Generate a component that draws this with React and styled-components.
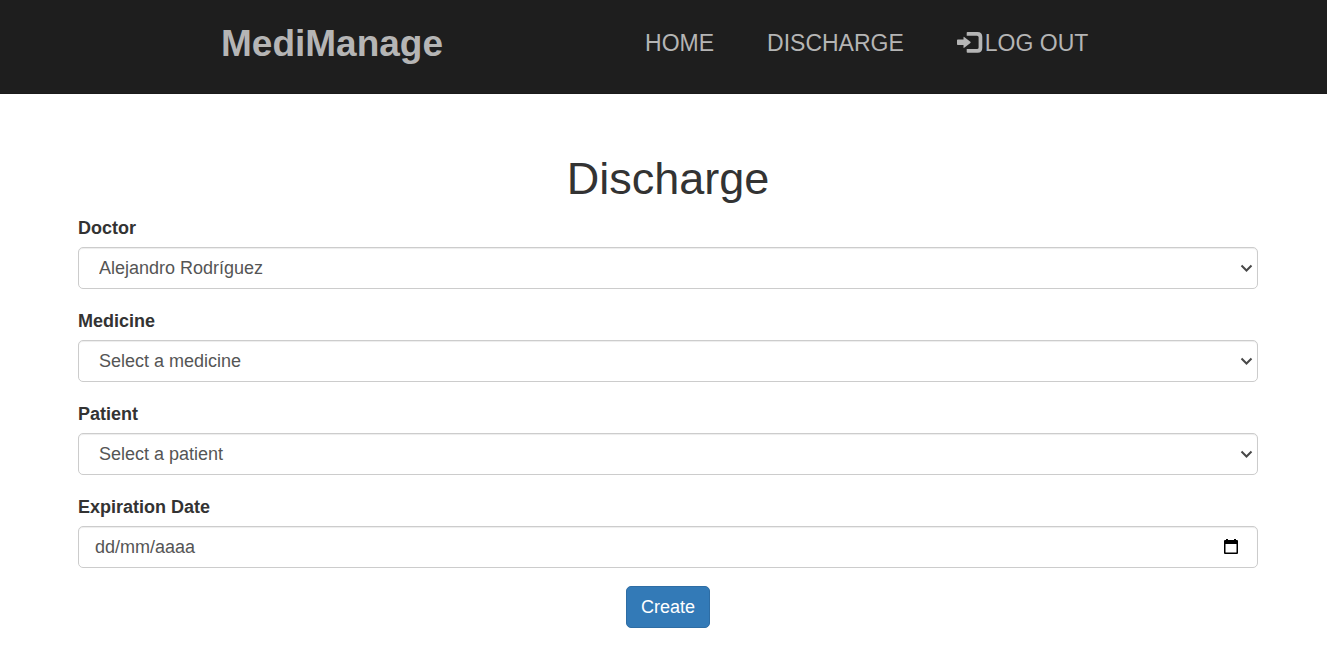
import React from "react";
import styled, { createGlobalStyle } from "styled-components";

const GlobalStyle = createGlobalStyle`
  *, *::before, *::after { box-sizing: border-box; }
  body {
    margin: 0;
    background: #fff;
    color: #333;
    font-family: "Liberation Sans", Arial, Helvetica, sans-serif;
    font-size: 18px;
    line-height: 25px;
  }
`;

const Navbar = styled.header`
  display: flex;
  align-items: center;
  gap: 202px;
  min-height: 94px;
  padding: 0 24px 8px 221px;
  background: #1e1e1e;
  border-bottom: 1px solid #1a1a1a;
`;

const Brand = styled.a`
  padding-top: 2px;
  color: #b5b5b5;
  font-size: 37px;
  line-height: 46px;
  font-weight: bold;
  text-decoration: none;
`;

const NavLinks = styled.nav`
  display: flex;
  gap: 53px;
`;

const NavLink = styled.a`
  display: flex;
  align-items: center;
  gap: 2px;
  color: #b5b5b5;
  font-size: 23px;
  line-height: 32px;
  text-decoration: none;
  white-space: nowrap;
`;

const Main = styled.main`
  padding: 60px 69px 24px 78px;
`;

const Title = styled.h1`
  margin: 0 0 12px;
  font-size: 45px;
  line-height: 50px;
  font-weight: normal;
  text-align: center;
`;

const Form = styled.form`
  display: flex;
  flex-direction: column;
  gap: 18px;
`;

const Fields = styled.div`
  display: flex;
  flex-direction: column;
  gap: 20px;
`;

const Field = styled.div`
  display: flex;
  flex-direction: column;
  gap: 6px;
`;

const Label = styled.label`
  font-weight: bold;
`;

const ControlBox = styled.div`
  display: grid;
  grid-template-columns: 1fr auto;
  align-items: center;
  height: 42px;
  background: #fff;
  border: 1px solid #ccc;
  border-radius: 5px;
  box-shadow: inset 0 1px 1px rgba(0, 0, 0, 0.075);
  color: #555;
`;

const Select = styled.select`
  grid-area: 1 / 1 / 2 / 3;
  width: 100%;
  height: 40px;
  padding: 0 32px 0 20px;
  border: 0;
  background: transparent;
  color: inherit;
  font: inherit;
  appearance: none;
`;

const Chevron = styled.svg`
  grid-area: 1 / 2;
  margin-right: 4px;
  pointer-events: none;
`;

const DateInput = styled.input`
  min-width: 0;
  height: 40px;
  padding: 0 16px;
  border: 0;
  background: transparent;
  color: inherit;
  font: inherit;

  &::placeholder { color: inherit; opacity: 1; }
`;

const PickerButton = styled.button`
  display: flex;
  margin-right: 18px;
  padding: 0;
  border: 0;
  background: none;
  color: #000;
`;

const SubmitButton = styled.button`
  align-self: center;
  height: 42px;
  padding: 0 14px;
  border: 1px solid #2e6da4;
  border-radius: 5px;
  background: #337ab7;
  color: #fff;
  font: inherit;
`;

function LogOutIcon() {
  return (
    <svg width="26" height="22" viewBox="0 0 26 22" fill="currentColor" aria-hidden="true">
      <path d="M.8 7.500H6.500V5.200q0-.8.700-.3L13.400 9.700q.6.600 0 1.200L7.200 15.700q-.7.500-.7-.3V13H.8Q0 13 0 12.200V8.300q0-.8.800-.8z" />
      <path d="M10.500 0H20.500Q25.300 0 25.300 4.800V16Q25.300 20.800 20.500 20.800H10.500Q9.700 20.800 9.700 20V17.100H20Q21.600 17.100 21.600 15.500V5.300Q21.600 3.700 20 3.700H9.700V.8Q9.700 0 10.500 0z" />
    </svg>
  );
}

function SelectField({ id, label, options }) {
  return (
    <Field>
      <Label htmlFor={id}>{label}</Label>
      <ControlBox>
        <Select id={id}>
          {options.map((option) => (
            <option key={option}>{option}</option>
          ))}
        </Select>
        <Chevron width="13" height="10" viewBox="0 0 13 10" fill="none" stroke="#484848" strokeWidth="2" aria-hidden="true">
          <path d="M1.500 2.500 6.500 7.500 11.500 2.500" />
        </Chevron>
      </ControlBox>
    </Field>
  );
}

export default function App() {
  return (
    <>
      <GlobalStyle />
      <Navbar>
        <Brand href="#">MediManage</Brand>
        <NavLinks>
          <NavLink href="#">HOME</NavLink>
          <NavLink href="#">DISCHARGE</NavLink>
          <NavLink href="#">
            <LogOutIcon />
            LOG OUT
          </NavLink>
        </NavLinks>
      </Navbar>
      <Main>
        <Title>Discharge</Title>
        <Form>
          <Fields>
            <SelectField id="doctor" label="Doctor" options={["Alejandro Rodríguez"]} />
            <SelectField id="medicine" label="Medicine" options={["Select a medicine"]} />
            <SelectField id="patient" label="Patient" options={["Select a patient"]} />
            <Field>
              <Label htmlFor="expiration">Expiration Date</Label>
              <ControlBox>
                <DateInput id="expiration" type="text" placeholder="dd/mm/aaaa" />
                <PickerButton type="button" aria-label="Open calendar">
                  <svg width="16" height="16" viewBox="0 0 16 16" fill="currentColor" aria-hidden="true">
                    <path fillRule="evenodd" d="M3 0h2v1h6V0h2v1h1q1 0 1 1v12q0 1-1 1H2q-1 0-1-1V2q0-1 1-1h1zM2.500 5v8.500h11V5z" />
                  </svg>
                </PickerButton>
              </ControlBox>
            </Field>
          </Fields>
          <SubmitButton type="button">Create</SubmitButton>
        </Form>
      </Main>
    </>
  );
}
